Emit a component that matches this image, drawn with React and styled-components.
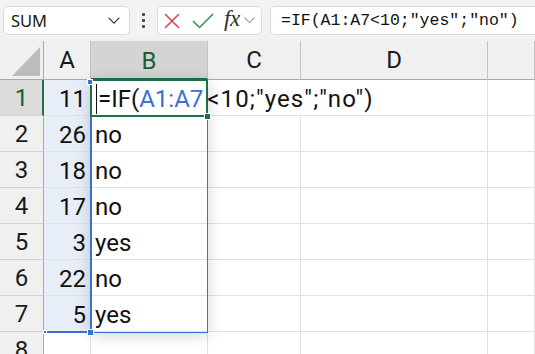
import React from 'react'
import styled, { createGlobalStyle } from 'styled-components'

const GlobalStyle = createGlobalStyle`
  html, body {
    margin: 0;
    padding: 0;
    background: #ffffff;
    overflow: hidden;
  }
  * { box-sizing: border-box; }
`;

const CELL_FONT = `Roboto, "Liberation Sans", sans-serif`;
const ROW_H = 36;
const HEAD_H = 39;

const Page = styled.div`
  width: 535px;
  height: 354px;
  overflow: hidden;
  background: #fff;
`;

const Toolbar = styled.div`
  height: 41px;
  display: flex;
  align-items: flex-start;
  padding: 6px 0 0 3px;
  background: linear-gradient(to bottom, #f3f3f3 0%, #f3f3f3 85%, #eef1e9 100%);
`;

const Box = styled.div`
  height: 29px;
  background: #fff;
  border: 1px solid #dadada;
  border-radius: 5px;
  display: flex;
  align-items: center;
`;

const NameBox = styled(Box)`
  width: 127px;
  padding: 0 9px 0 7px;
  justify-content: space-between;
  font-family: "Noto Sans", "Open Sans", sans-serif;
  font-size: 16.5px;
  color: #1a1a1a;
`;

const Dots = styled.div`
  width: 27px;
  height: 29px;
  display: flex;
  flex-direction: column;
  align-items: center;
  justify-content: center;
  gap: 3px;
  & span {
    width: 3px;
    height: 3px;
    background: #444;
    border-radius: 1px;
  }
`;

const FxBox = styled(Box)`
  width: 105px;
  padding: 0 3px 0 6px;
`;

const Fx = styled.span`
  font-family: "Liberation Serif", "DejaVu Serif", serif;
  font-style: italic;
  font-size: 23px;
  color: #2b2b2b;
  margin: 0 4px 3px 10px;
  letter-spacing: -0.5px;
`;

const FormulaBox = styled(Box)`
  flex: 1;
  margin-left: 8px;
  border-right: none;
  border-radius: 5px 0 0 5px;
  padding-left: 10px;
  font-family: "Liberation Mono", "DejaVu Sans Mono", monospace;
  font-size: 16.5px;
  color: #111;
  white-space: nowrap;
`;

const Sheet = styled.div`
  position: relative;
  display: grid;
  grid-template-columns: 44px 47px 117px 93px 187px 1fr;
  grid-auto-rows: ${ROW_H}px;
  grid-template-rows: ${HEAD_H}px;
  font-family: ${CELL_FONT};
`;

const Corner = styled.div`
  position: relative;
  background: #f0f0f0;
  border-right: 1px solid #a9a9a9;
  border-bottom: 1px solid #a9a9a9;
  &::after {
    content: "";
    position: absolute;
    right: 3px;
    bottom: 3px;
    width: 0;
    height: 0;
    border-left: 28px solid transparent;
    border-bottom: 29px solid #bcbcbc;
  }
`;

const ColHead = styled.div`
  background: ${p => (p.$active ? '#d4d4d4' : '#f0f0f0')};
  color: ${p => (p.$active ? '#1b5e38' : '#1a1a1a')};
  border-right: 1px solid #c4c4c4;
  border-bottom: ${p => (p.$active ? '2px solid #1e6f43' : '1px solid #a9a9a9')};
  display: flex;
  align-items: center;
  justify-content: center;
  font-size: 24px;
  padding-top: ${p => (p.$active ? '2px' : '0')};
`;

const RowHead = styled.div`
  background: ${p => (p.$active ? '#dcdcdc' : '#f0f0f0')};
  color: ${p => (p.$active ? '#1b5e38' : '#1a1a1a')};
  border-right: ${p => (p.$active ? '2px solid #1e6f43' : '1px solid #a9a9a9')};
  border-bottom: 1px solid #d2d2d2;
  display: flex;
  align-items: center;
  justify-content: center;
  font-size: 24px;
  padding-left: ${p => (p.$active ? '1px' : '0')};
`;

const Cell = styled.div`
  border-right: 1px solid #e1e1e1;
  border-bottom: 1px solid #e1e1e1;
  display: flex;
  align-items: center;
  justify-content: ${p => (p.$num ? 'flex-end' : 'flex-start')};
  padding: 2px 4px 0 4px;
  font-size: 24px;
  color: #111;
  white-space: nowrap;
  background: ${p => (p.$ref ? '#e8eef8' : '#fff')};
`;

const EditCell = styled.div`
  grid-column: span 3;
  background: #fff;
  border-right: 1px solid #e1e1e1;
  border-bottom: 1px solid #e1e1e1;
  display: flex;
  align-items: center;
  padding: 2px 0 0 5px;
  font-size: 24px;
  color: #111;
  white-space: nowrap;
`;

const Caret = styled.span`
  display: inline-block;
  width: 1px;
  height: 30px;
  background: #111;
  margin-right: 1px;
`;

const RefText = styled.span`
  color: #3a6fd3;
`;

const Tail = styled.span`
  margin-left: 4px;
  letter-spacing: 1.1px;
`;

const Overlay = styled.div`
  position: absolute;
  pointer-events: none;
`;

const SpillRange = styled(Overlay)`
  left: 90px;
  top: ${HEAD_H}px;
  width: 118px;
  height: ${ROW_H * 7 + 1}px;
  border: 1px solid #3a6fd3;
  border-top: none;
  box-shadow: 0 2px 14px rgba(0, 0, 0, 0.18);
`;

const RefRange = styled(Overlay)`
  left: 43px;
  top: ${HEAD_H}px;
  width: 49px;
  height: ${ROW_H * 7 + 1}px;
  border-right: 2px solid #3a6fd3;
  border-bottom: 2px solid #3a6fd3;
`;

const ActiveCell = styled(Overlay)`
  left: 90px;
  top: ${HEAD_H - 1}px;
  width: 118px;
  height: ${ROW_H + 2}px;
  border: 2px solid #1e6f43;
`;

const Handle = styled(Overlay)`
  width: ${p => p.$size}px;
  height: ${p => p.$size}px;
  background: ${p => p.$color};
  border: 1px solid #fff;
`;

const Chevron = ({ color = '#333', size = 12 }) => (
  <svg width={size} height={size * 0.6} viewBox="0 0 12 7" fill="none">
    <path d="M1 1l5 5 5-5" stroke={color} strokeWidth="1.3" strokeLinecap="round" strokeLinejoin="round" />
  </svg>
);

const CrossIcon = () => (
  <svg width="16" height="16" viewBox="0 0 16 16" fill="none">
    <path d="M1.5 1.5l13 13M14.5 1.5l-13 13" stroke="#e2474b" strokeWidth="1.6" strokeLinecap="round" />
  </svg>
);

const CheckIcon = () => (
  <svg width="22" height="16" viewBox="0 0 22 16" fill="none" style={{ marginLeft: 12 }}>
    <path d="M1.5 8.5l6 6L20.5 1.5" stroke="#3b9a57" strokeWidth="1.7" strokeLinecap="round" strokeLinejoin="round" />
  </svg>
);

const rows = [11, 26, 18, 17, 3, 22, 5];
const results = rows.map(v => (v < 10 ? 'yes' : 'no'));

export default function App() {
  return (
    <Page>
      <GlobalStyle />
      <Toolbar>
        <NameBox>
          <span>SUM</span>
          <Chevron color="#333" size={12} />
        </NameBox>
        <Dots><span /><span /><span /></Dots>
        <FxBox>
          <CrossIcon />
          <CheckIcon />
          <Fx>fx</Fx>
          <Chevron color="#a0a0a0" size={11} />
        </FxBox>
        <FormulaBox>=IF(A1:A7&lt;10;"yes";"no")</FormulaBox>
      </Toolbar>

      <Sheet>
        <Corner />
        <ColHead>A</ColHead>
        <ColHead $active>B</ColHead>
        <ColHead>C</ColHead>
        <ColHead>D</ColHead>
        <ColHead />

        {rows.map((v, i) => (
          <React.Fragment key={i}>
            <RowHead $active={i === 0}>{i + 1}</RowHead>
            <Cell $num $ref>{v}</Cell>
            {i === 0 ? (
              <EditCell>
                <Caret />=IF(<RefText>A1:A7</RefText><Tail>&lt;10;"yes";"no")</Tail>
              </EditCell>
            ) : (
              <>
                <Cell>{results[i]}</Cell>
                <Cell />
                <Cell />
              </>
            )}
            <Cell />
          </React.Fragment>
        ))}
        <RowHead>8</RowHead>
        <Cell /><Cell /><Cell /><Cell /><Cell />

        <SpillRange />
        <RefRange />
        <ActiveCell />
        <Handle $size={6} $color="#3a6fd3" style={{ left: 87, top: HEAD_H - 1 }} />
        <Handle $size={7} $color="#3a6fd3" style={{ left: 87, top: HEAD_H + ROW_H * 7 - 3 }} />
        <Handle $size={4} $color="#3a6fd3" style={{ left: 43, top: HEAD_H + ROW_H * 7 - 2 }} />
        <Handle $size={7} $color="#1e6f43" style={{ left: 204, top: HEAD_H + ROW_H - 3 }} />
      </Sheet>
    </Page>
  );
}
